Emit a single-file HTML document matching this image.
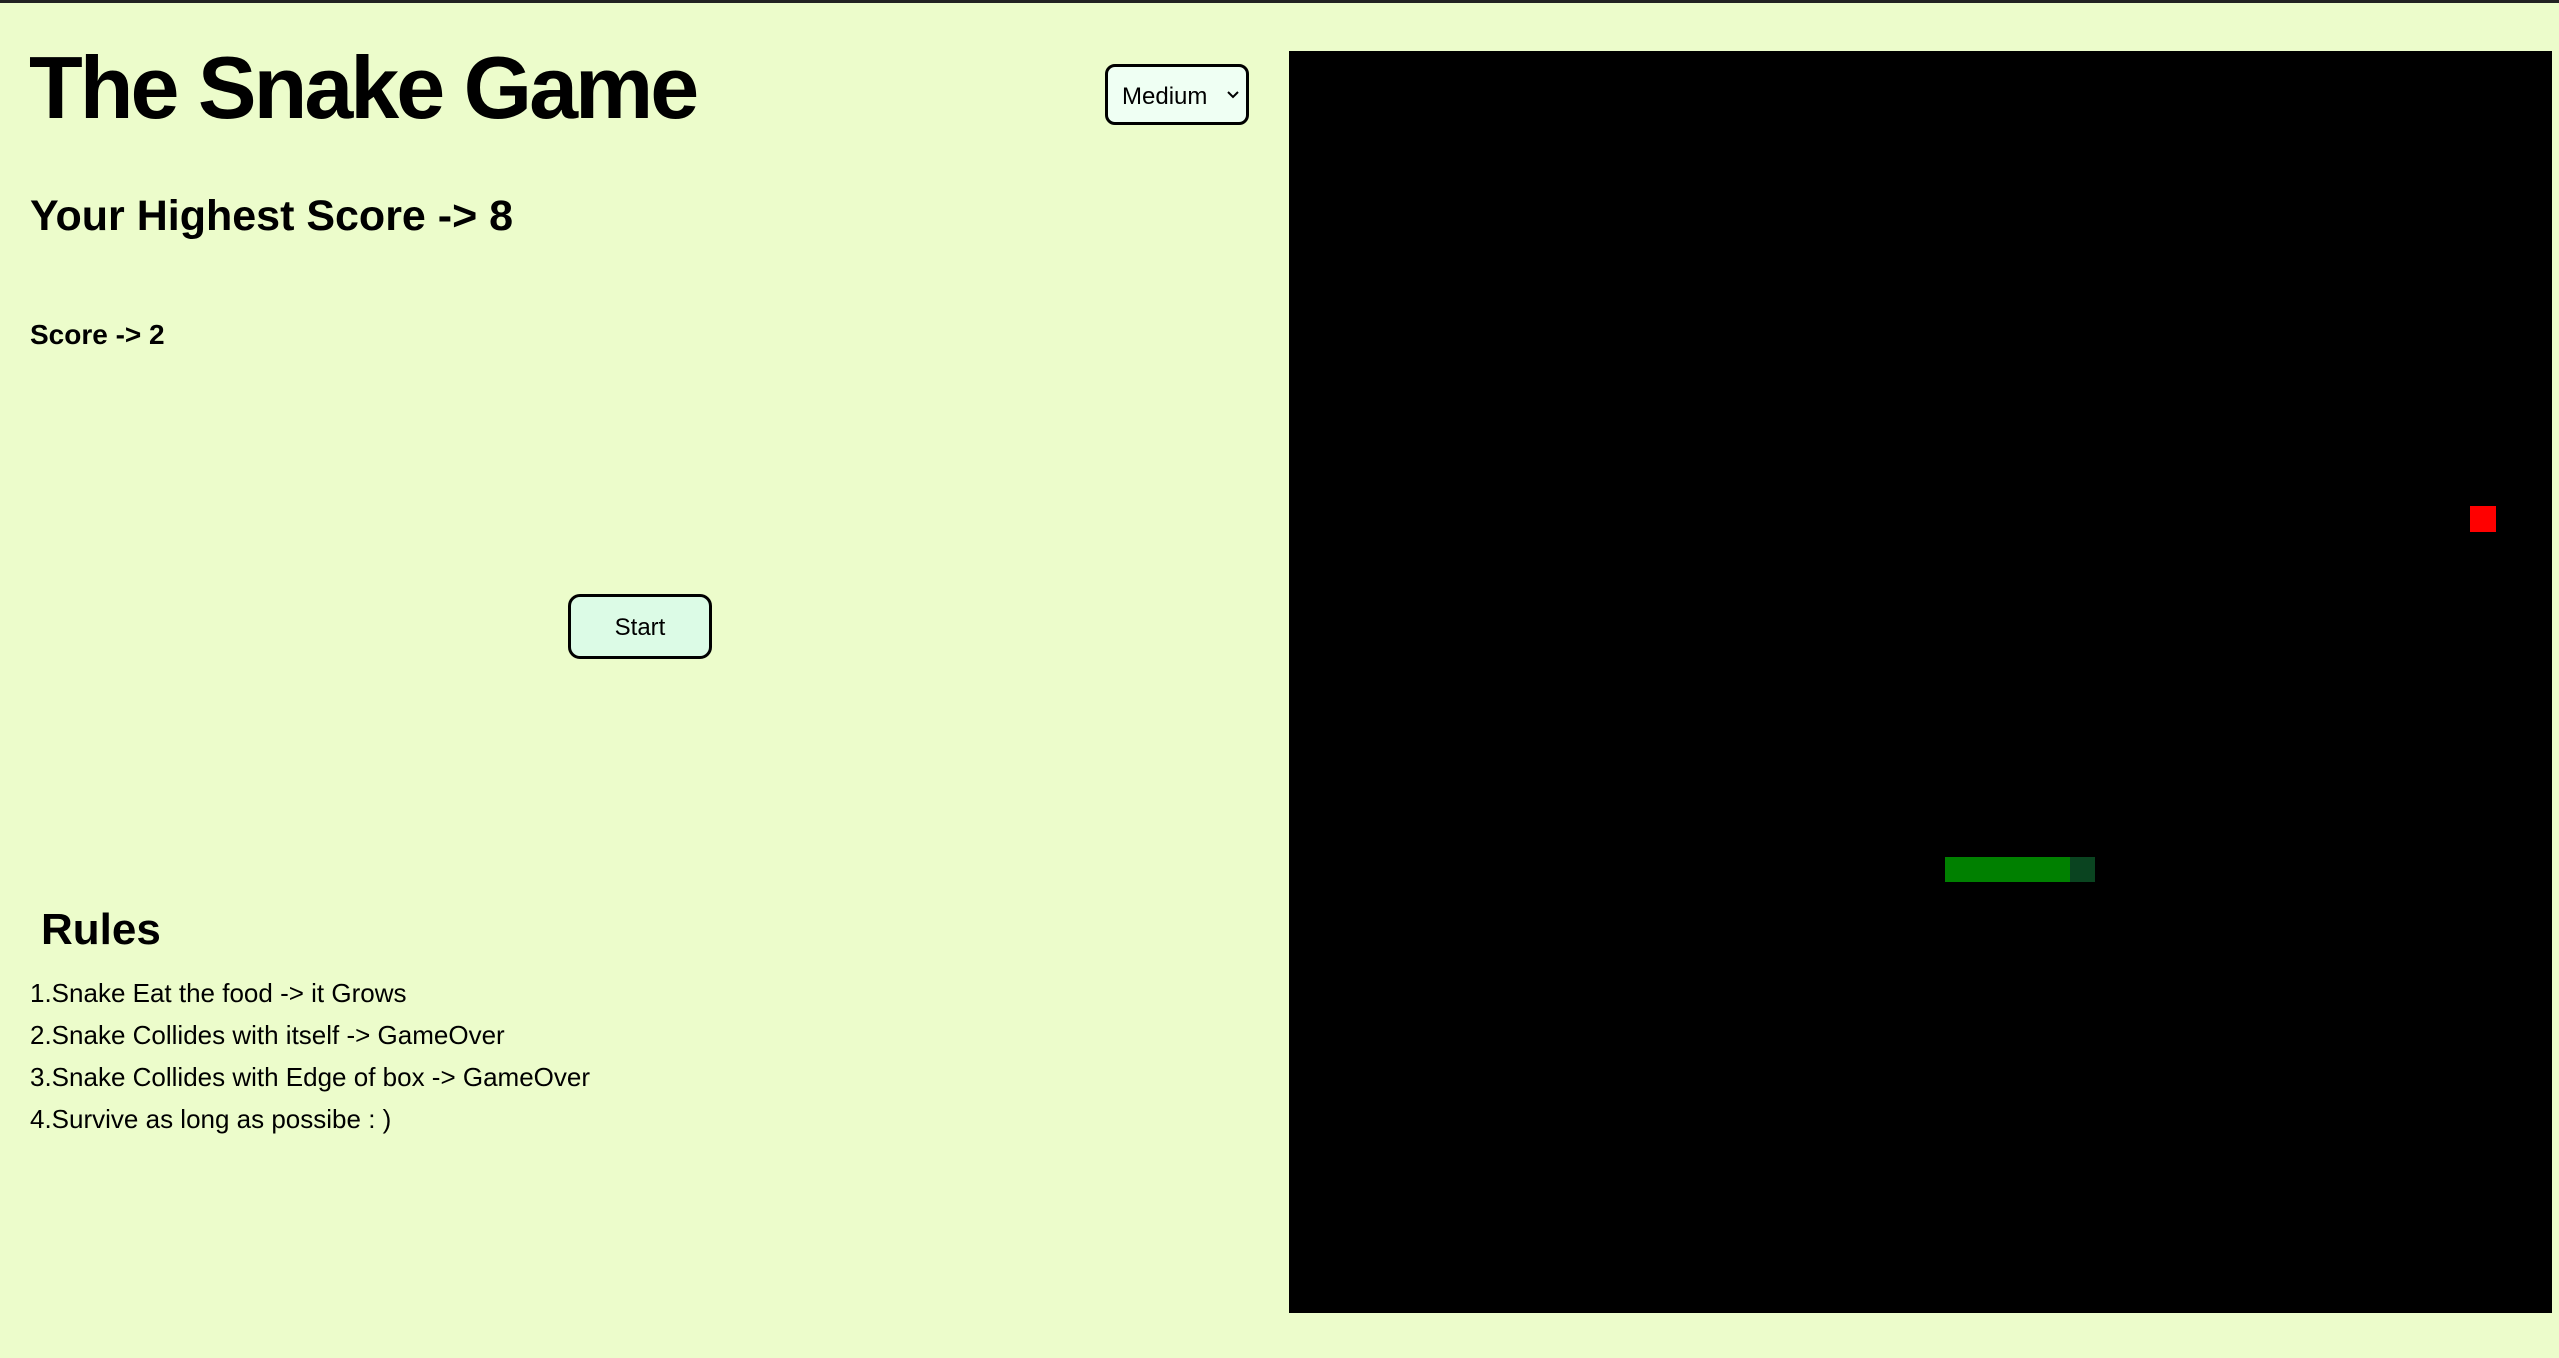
<!DOCTYPE html>
<html><head><meta charset="utf-8"><style>
html,body{margin:0;padding:0;}
body{width:2559px;height:1358px;background:#ecfccb;position:relative;overflow:hidden;font-family:"Liberation Sans",sans-serif;color:#000;}
.a{position:absolute;white-space:nowrap;line-height:1;}
</style></head><body>
<div class="a" style="left:0;top:0;width:2559px;height:3px;background:#222;"></div>
<div class="a" style="left:29px;top:44px;font-size:88px;font-weight:bold;letter-spacing:-3px;">The Snake Game</div>
<div class="a" style="left:1105px;top:64px;width:144px;height:61px;box-sizing:border-box;border:3px solid #000;border-radius:10px;background:#effff3;">
 <span class="a" style="left:14px;top:18px;font-size:24px;">Medium</span>
 <svg class="a" style="left:118px;top:22px" width="14" height="12" viewBox="0 0 14 12"><path d="M2 3 L7 8 L12 3" fill="none" stroke="#000" stroke-width="2"/></svg>
</div>
<div class="a" style="left:30px;top:195px;font-size:43px;font-weight:bold;">Your Highest Score -&gt; 8</div>
<div class="a" style="left:30px;top:321px;font-size:28px;font-weight:bold;">Score -&gt; 2</div>
<div class="a" style="left:568px;top:594px;width:144px;height:65px;box-sizing:border-box;border:3px solid #000;border-radius:12px;background:#dcfbe6;text-align:center;">
 <span style="display:block;margin-top:19px;font-size:24px;">Start</span>
</div>
<div class="a" style="left:41px;top:908px;font-size:44px;font-weight:bold;">Rules</div>
<div class="a" style="left:30px;top:972px;font-size:26px;line-height:42px;">1.Snake Eat the food -&gt; it Grows<br>2.Snake Collides with itself -&gt; GameOver<br>3.Snake Collides with Edge of box -&gt; GameOver<br>4.Survive as long as possibe : )</div>
<div class="a" style="left:1289px;top:51px;width:1263px;height:1262px;background:#000;">
 <div class="a" style="left:1181px;top:455px;width:26px;height:26px;background:#f00;"></div>
 <div class="a" style="left:656px;top:806px;width:125px;height:25px;background:#008000;"></div>
 <div class="a" style="left:781px;top:806px;width:25px;height:25px;background:#0a4420;"></div>
</div>
</body></html>
